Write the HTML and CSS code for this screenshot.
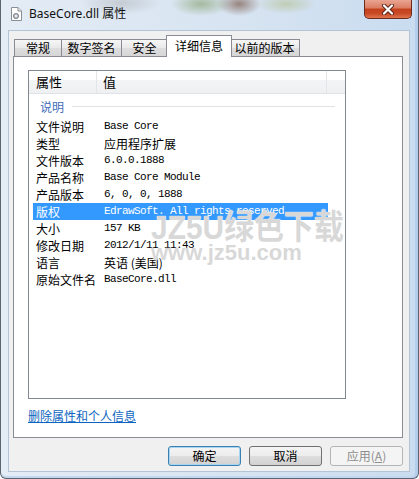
FILE: index.html
```html
<!DOCTYPE html>
<html>
<head>
    <title>BaseCore.dll 属性</title>
    <link rel="stylesheet" href="styles.css">
</head>
<body>
    <div class="window">
        <div class="titlebar">
            <svg class="app-icon" width="13" height="14" viewBox="0 0 13 14">
                <path d="M1.5 0.5 H8 L11.5 4 V13.5 H1.5 Z" fill="#fff" stroke="#8a8f96"/>
                <path d="M8 0.5 V4 H11.5" fill="#e6e9ee" stroke="#8a8f96"/>
                <circle cx="6" cy="9" r="2.6" fill="#b9bec6" stroke="#6c727b" stroke-width="0.8"/>
                <circle cx="6" cy="9" r="0.9" fill="#fff"/>
            </svg>
            <span class="title">BaseCore.dll 属性</span>
            <div class="close-btn">
                <svg width="14" height="11" viewBox="0 0 14 11">
                    <path d="M3 1.5 L11 9.5 M11 1.5 L3 9.5" stroke="#5a2416" stroke-width="4" stroke-linecap="round"/>
                    <path d="M3 1.5 L11 9.5 M11 1.5 L3 9.5" stroke="#fff" stroke-width="2.2" stroke-linecap="round"/>
                </svg>
            </div>
        </div>

        <div class="client">
            <div class="tabs">
                <div class="tab first">常规</div>
                <div class="tab sign">数字签名</div>
                <div class="tab safe">安全</div>
                <div class="tab active">详细信息</div>
                <div class="tab last">以前的版本</div>
            </div>

            <div class="panel">
                <div class="list">
                    <div class="list-head">
                        <div class="col-name">属性</div>
                        <div class="col-value">值</div>
                    </div>
                    <div class="group">
                        <span>说明</span>
                        <i class="group-line"></i>
                    </div>
                    <div class="row"><span class="lbl">文件说明</span><span class="val mono">Base Core</span></div>
                    <div class="row"><span class="lbl">类型</span><span class="val">应用程序扩展</span></div>
                    <div class="row"><span class="lbl">文件版本</span><span class="val mono">6.0.0.1888</span></div>
                    <div class="row"><span class="lbl">产品名称</span><span class="val mono">Base Core Module</span></div>
                    <div class="row"><span class="lbl">产品版本</span><span class="val mono">6, 0, 0, 1888</span></div>
                    <div class="row selected"><span class="lbl">版权</span><span class="val mono">EdrawSoft. All rights reserved.</span></div>
                    <div class="row"><span class="lbl">大小</span><span class="val mono">157 KB</span></div>
                    <div class="row"><span class="lbl">修改日期</span><span class="val mono">2012/1/11 11:43</span></div>
                    <div class="row"><span class="lbl">语言</span><span class="val">英语 (美国)</span></div>
                    <div class="row"><span class="lbl">原始文件名</span><span class="val mono">BaseCore.dll</span></div>
                </div>
                <a class="remove-link" href="#">删除属性和个人信息</a>
            </div>

            <div class="buttons">
                <button class="btn default">确定</button>
                <button class="btn">取消</button>
                <button class="btn disabled">应用(<u>A</u>)</button>
            </div>
        </div>

        <!-- watermark from the source image -->
        <div class="watermark">
            <div class="wm-big">JZ5U绿色下载</div>
            <div class="wm-small">www.jz5u.com</div>
        </div>
    </div>
</body>
</html>
```

FILE: styles.css
```css
body {
    margin: 0;
    width: 419px;
    height: 479px;
    overflow: hidden;
    font-family: "Noto Sans CJK SC", "Noto Sans", sans-serif;
    font-size: 12px;
    color: #000;
    background: #fff;
}

.window {
    position: relative;
    box-sizing: border-box;
    width: 419px;
    height: 479px;
    padding: 0 8px 6px 7px;
    border-left: 1px solid #5b6470;
    border-right: 1px solid #5b6470;
    border-bottom: 1px solid #5b6470;
    border-radius: 0 0 6px 6px;
    background:
        radial-gradient(ellipse 30px 12px at 200px 4px, rgba(120, 150, 90, 0.55), transparent),
        radial-gradient(ellipse 22px 12px at 238px 4px, rgba(110, 70, 50, 0.6), transparent),
        radial-gradient(ellipse 30px 10px at 285px 4px, rgba(170, 180, 110, 0.45), transparent),
        radial-gradient(ellipse 40px 12px at 120px 3px, rgba(150, 150, 150, 0.35), transparent),
        linear-gradient(to right, #e4ecf5 0%, #d6e3f1 60%, #c9dcf0 100%);
    box-shadow: inset -3px 0 0 #b3cdea, inset 0 -2px 0 #c3d8ee;
}

.titlebar {
    height: 30px;
    display: flex;
    align-items: flex-start;
}

.app-icon {
    margin: 7px 0 0 2px;
}

.title {
    margin: 5px 0 0 6px;
    font-family: "Noto Sans", "Noto Sans CJK SC", sans-serif;
    font-size: 12px;
    line-height: 17px;
    color: #111;
}

.close-btn {
    margin-left: auto;
    margin-right: -2px;
    width: 48px;
    height: 19px;
    box-sizing: border-box;
    border: 1px solid #6a2b1c;
    border-top: none;
    border-radius: 0 0 5px 5px;
    background: linear-gradient(#e9a592 0%, #dc7c62 45%, #c4401d 50%, #c94a26 75%, #e0764f 100%);
    display: flex;
    align-items: center;
    justify-content: center;
}

.client {
    box-sizing: border-box;
    height: 442px;
    background: #f0f0f0;
    border: 1px solid #b4c4d6;
}

.tabs {
    display: flex;
    align-items: flex-end;
    height: 21px;
    padding: 4px 0 0 5px;
}

.tab {
    box-sizing: border-box;
    height: 17px;
    padding: 0;
    margin-left: -1px;
    border: 1px solid #898c95;
    border-bottom: none;
    background: linear-gradient(#f6f6f6, #e9e9e9 50%, #dedede 51%, #d6d6d6);
    line-height: 15px;
    text-align: center;
}

.tab.first {
    margin-left: 0;
    width: 48px;
}

.tab.sign {
    width: 61px;
}

.tab.safe {
    width: 47px;
}

.tab.active {
    position: relative;
    z-index: 1;
    width: 66px;
    height: 22px;
    margin: 0 -2px -1px -2px;
    background: #fff;
    line-height: 20px;
}

.tab.last {
    width: 71px;
}

.panel {
    box-sizing: border-box;
    width: 390px;
    height: 382px;
    margin-left: 4px;
    padding: 13px 0 0 14px;
    border: 1px solid #898c95;
    background: #fff;
}

.list {
    box-sizing: border-box;
    width: 318px;
    height: 329px;
    border: 1px solid #828790;
}

.list-head {
    display: flex;
    height: 23px;
    border-bottom: 1px solid #dfe2e6;
    background: linear-gradient(#ffffff 0%, #ffffff 40%, #f3f4f6 41%, #eef0f2 100%);
    box-sizing: border-box;
    line-height: 22px;
    font-size: 13px;
}

.col-name {
    width: 68px;
    padding-left: 7px;
    box-sizing: border-box;
    border-right: 1px solid #e3e5e8;
}

.col-value {
    width: 230px;
    padding-left: 6px;
    box-sizing: border-box;
    border-right: 1px solid #e3e5e8;
}

.group {
    display: flex;
    align-items: center;
    height: 24px;
    padding: 0 10px 0 11px;
    color: #3f6cb8;
}

.group-line {
    flex: 1;
    height: 1px;
    margin-left: 8px;
    background: #e3e3e3;
}

.row {
    display: flex;
    align-items: center;
    box-sizing: border-box;
    width: 295px;
    height: 17px;
    margin-left: 4px;
    padding-left: 3px;
    line-height: 17px;
    white-space: nowrap;
}

.row.selected {
    background: #3399ff;
    color: #fff;
}

.lbl {
    width: 68px;
    flex-shrink: 0;
}

.mono {
    font-family: "Liberation Mono", monospace;
    font-size: 11px;
    letter-spacing: -0.6px;
}

.remove-link {
    display: inline-block;
    margin-top: 9px;
    color: #0b64c0;
    text-decoration: underline;
    line-height: 15px;
}

.buttons {
    display: flex;
    justify-content: flex-end;
    gap: 8px;
    margin-top: 8px;
    padding-right: 6px;
}

.btn {
    box-sizing: border-box;
    width: 73px;
    height: 20px;
    padding: 0;
    border: 1px solid #707070;
    border-radius: 3px;
    background: linear-gradient(#f4f4f4 0%, #ececec 50%, #dedede 51%, #d2d2d2 100%);
    font-family: "Noto Sans CJK SC", sans-serif;
    font-size: 12px;
    line-height: 18px;
    color: #000;
}

.btn.default {
    border-color: #3c7fb1;
    box-shadow: inset 0 0 0 1px #a6d6f2;
}

.btn.disabled {
    border-color: #b3b6b9;
    background: #f4f4f4;
    color: #8d8d8d;
}

.btn u {
    text-decoration: underline;
}

.watermark {
    position: absolute;
    left: 150px;
    top: 212px;
    pointer-events: none;
    font-family: "Liberation Sans", "Noto Sans CJK SC", sans-serif;
    font-weight: bold;
    color: rgba(190, 190, 190, 0.6);
    text-shadow: 0 0 1px #fff, 0 0 1px #fff;
}

.wm-big {
    font-size: 34px;
    line-height: 30px;
    white-space: nowrap;
    transform: scaleX(0.88);
    transform-origin: left top;
}

.wm-small {
    font-size: 22px;
    line-height: 22px;
    white-space: nowrap;
}
```
